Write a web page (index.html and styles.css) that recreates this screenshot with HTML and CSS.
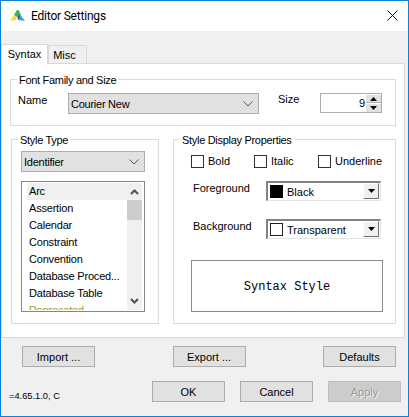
FILE: index.html
```html
<!DOCTYPE html>
<html lang="en">
<head>
<meta charset="utf-8">
<title>Editor Settings</title>
<link rel="stylesheet" href="styles.css">
</head>
<body>
<div class="window">
  <header class="titlebar">
    <svg class="logo" width="15" height="12" viewBox="0 0 15 12">
      <polygon points="7,0 8.5,0 11,5 7.5,7 4,5" fill="#3fae5a"/>
      <polygon points="4,5 7,7.5 6,10 0,11" fill="#f2dc3c"/>
      <polygon points="7.5,6.5 10.5,4.5 10,9 8,10" fill="#2f5f8a"/>
      <polygon points="10.5,5 15,11 8.5,10" fill="#3f9ee0"/>
    </svg>
    <span class="title">Editor Settings</span>
    <svg class="close" width="11" height="11" viewBox="0 0 11 11">
      <path d="M0.5 0.5L10.5 10.5M10.5 0.5L0.5 10.5" stroke="#111" stroke-width="1" fill="none"/>
    </svg>
  </header>
  <div class="tabs">
    <div class="tab tab-active">Syntax</div>
    <div class="tab tab-misc">Misc</div>
  </div>
  <main class="panel">
    <fieldset class="group group-font">
      <legend>Font Family and Size</legend>
      <div class="font-row">
        <span class="name-label">Name</span>
        <div class="combo combo-font">
          <span>Courier New</span>
          <svg class="chev" width="10" height="6" viewBox="0 0 10 6"><path d="M0.5 0.5L5 5L9.5 0.5" stroke="#555" fill="none"/></svg>
        </div>
        <span class="size-label">Size</span>
        <div class="spinner">
          <span class="spin-value">9</span>
          <div class="spin-btns">
            <div class="spin-btn"><svg width="7" height="4" viewBox="0 0 7 4"><polygon points="3.5,0 7,4 0,4" fill="#000"/></svg></div>
            <div class="spin-btn"><svg width="7" height="4" viewBox="0 0 7 4"><polygon points="0,0 7,0 3.5,4" fill="#000"/></svg></div>
          </div>
        </div>
      </div>
    </fieldset>
    <div class="columns">
      <fieldset class="group group-type">
        <legend>Style Type</legend>
        <div class="combo combo-type">
          <span>Identifier</span>
          <svg class="chev" width="10" height="6" viewBox="0 0 10 6"><path d="M0.5 0.5L5 5L9.5 0.5" stroke="#555" fill="none"/></svg>
        </div>
        <div class="list">
          <ul class="items">
            <li class="item item-selected">Arc</li>
            <li class="item">Assertion</li>
            <li class="item">Calendar</li>
            <li class="item">Constraint</li>
            <li class="item">Convention</li>
            <li class="item">Database Proced...</li>
            <li class="item">Database Table</li>
            <li class="item item-olive">Deprecated</li>
          </ul>
          <div class="scrollbar">
            <svg class="scroll-up" width="9" height="6" viewBox="0 0 9 6"><path d="M1 5L4.5 1.5L8 5" stroke="#505050" stroke-width="2" fill="none"/></svg>
            <div class="thumb"></div>
            <svg class="scroll-down" width="9" height="6" viewBox="0 0 9 6"><path d="M1 1L4.5 4.5L8 1" stroke="#505050" stroke-width="2" fill="none"/></svg>
          </div>
        </div>
      </fieldset>
      <fieldset class="group group-display">
        <legend>Style Display Properties</legend>
        <div class="checks">
          <label class="check check-bold"><span class="box"></span>Bold</label>
          <label class="check check-italic"><span class="box"></span>Italic</label>
          <label class="check"><span class="box"></span>Underline</label>
        </div>
        <div class="color-row color-fg">
          <span class="color-label">Foreground</span>
          <div class="color-combo">
            <span class="swatch swatch-black"></span>
            <span class="color-name">Black</span>
            <span class="drop"><svg width="7" height="4" viewBox="0 0 7 4"><polygon points="0,0 7,0 3.5,4" fill="#000"/></svg></span>
          </div>
        </div>
        <div class="color-row color-bg">
          <span class="color-label">Background</span>
          <div class="color-combo">
            <span class="swatch swatch-clear"></span>
            <span class="color-name">Transparent</span>
            <span class="drop"><svg width="7" height="4" viewBox="0 0 7 4"><polygon points="0,0 7,0 3.5,4" fill="#000"/></svg></span>
          </div>
        </div>
        <div class="preview">Syntax Style</div>
      </fieldset>
    </div>
  </main>
  <footer class="footer">
    <div class="row-tools">
      <button class="btn">Import ...</button>
      <button class="btn">Export ...</button>
      <button class="btn">Defaults</button>
    </div>
    <div class="row-actions">
      <span class="version">=4.65.1.0, C</span>
      <button class="btn">OK</button>
      <button class="btn">Cancel</button>
      <button class="btn btn-disabled">Apply</button>
    </div>
  </footer>
</div>
</body>
</html>
```
FILE: styles.css
```css
* { box-sizing: border-box; }
html, body { margin: 0; padding: 0; }
body { background: #f0f0f0; font-family: "Liberation Sans", Arial, sans-serif; font-size: 11px; color: #000; }
.window { width: 409px; height: 417px; border: 1px solid #0f80d8; background: #f0f0f0; overflow: hidden; display: flex; flex-direction: column; }
.titlebar { height: 30px; background: #fff; display: flex; align-items: center; padding: 0 10px 0 9px; flex: none; }
.logo { flex: none; margin-top: -1px; }
.title { margin-left: 6px; flex: 1; font-family: "Roboto", sans-serif; font-size: 12px; letter-spacing: -0.2px; margin-top: -1px; }
.close { flex: none; margin-top: -1px; }
.tabs { display: flex; height: 32px; align-items: flex-end; flex: none; }
.tab { height: 18px; width: 39px; border: 1px solid #d9d9d9; border-bottom: 0; background: #f0f0f0; text-align: center; line-height: 19px; }
.tab-misc { padding-right: 6px; }
.tab-active { height: 20px; width: 47px; background: #fff; border-bottom: 0; margin-bottom: -1px; line-height: 18px; position: relative; z-index: 1; }
.panel { width: 404px; height: 275px; background: #fff; border: 1px solid #d9d9d9; padding: 7px 8px 0 8px; flex: none; }
.group { margin: 0; padding: 0; border: 1px solid #dcdcdc; min-width: 0; }
.group legend { padding: 0 2px; line-height: 18px; height: 16px; font-size: 11px; letter-spacing: -0.3px; }
.group-font { height: 55px; width: 386px; padding-left: 7px; }
.group-font legend { margin-left: -1px; }
.font-row { display: flex; align-items: flex-start; margin-top: 6px; }
.name-label { width: 50px; margin-top: 1px; }
.combo { height: 21px; background: #e1e1e1; border: 1px solid #adadad; display: flex; align-items: center; justify-content: space-between; padding: 0 5px 0 2px; letter-spacing: -0.25px; }
.combo-font { width: 191px; }
.chev { flex: none; }
.size-label { margin-left: 19px; width: 42px; margin-top: 0; }
.spinner { width: 62px; height: 20px; border: 1px solid #adadad; background: #fff; display: flex; }
.spin-value { flex: 1; text-align: right; line-height: 18px; padding-right: 1px; }
.spin-btns { width: 15px; display: flex; flex-direction: column; padding: 1px 0 0; gap: 1px; }
.spin-btn { height: 8px; background: #e1e1e1; border-bottom: 1px solid #adadad; display: flex; align-items: center; justify-content: center; }
.spin-btn + .spin-btn { border-bottom: 0; height: 8px; }
.columns { display: flex; margin-top: 5px; }
.group-type { width: 148px; height: 193px; margin-left: 1px; padding-left: 9px; }
.group-type legend { margin-left: -3px; }
.combo-type { width: 124px; margin-top: 4px; }
.list { width: 124px; height: 131px; margin-top: 9px; border: 1px solid #82878f; background: #fff; display: flex; padding: 1px 2px 1px 5px; }
.items { list-style: none; margin: 0; padding: 0; width: 100px; overflow: hidden; height: 127px; }
.item { height: 17px; line-height: 17px; padding-left: 2px; white-space: nowrap; letter-spacing: -0.2px; }
.item-selected { background: #f0f0f0; }
.item-olive { color: #a89a20; }
.scrollbar { width: 15px; margin-left: 0; height: 127px; background: #f0f0f0; display: flex; flex-direction: column; align-items: center; }
.scroll-up { margin-top: 6px; flex: none; }
.thumb { width: 15px; height: 20px; background: #cdcdcd; margin-top: 5px; flex: none; }
.scroll-down { margin-top: auto; margin-bottom: 6px; flex: none; }
.group-display { width: 223px; height: 193px; margin-left: 14px; padding-left: 17px; }
.group-display legend { margin-left: -11px; }
.checks { display: flex; margin-top: 7px; }
.check { display: flex; align-items: center; height: 14px; width: 63px; }
.check-italic { width: 64px; }
.box { width: 13px; height: 13px; border: 1px solid #333; background: #fff; margin-right: 4px; flex: none; }
.color-row { display: flex; margin-left: 2px; }
.color-fg { margin-top: 13px; }
.color-bg { margin-top: 18px; }
.color-label { width: 73px; line-height: 14px; }
.color-combo { width: 115px; height: 20px; border: 2px solid #828282; border-right: 1px solid #e3e3e3; border-bottom: 1px solid #e3e3e3; background: #fff; display: flex; align-items: center; padding: 0 1px 0 2px; }
.swatch { width: 13px; height: 13px; flex: none; }
.swatch-black { background: #000; }
.swatch-clear { background: #fff; border: 1px solid #222; }
.color-name { flex: 1; margin-left: 4px; font-size: 11px; }
.drop { width: 16px; height: 16px; align-self: flex-start; background: #f0f0f0; border: 1px solid; border-color: #fff #707070 #707070 #fff; display: flex; align-items: center; justify-content: center; flex: none; }
.preview { width: 192px; height: 52px; margin-top: 21px; padding-top: 2px; border: 1px solid #8a8a8a; background: #fff; font-family: "Liberation Mono", monospace; font-size: 12px; display: flex; align-items: center; justify-content: center; }
.footer { flex: 1; display: flex; flex-direction: column; padding-top: 8px; }
.btn { width: 73px; height: 21px; padding: 0; background: #e1e1e1; border: 1px solid #adadad; font: inherit; color: #000; }
.row-tools { display: flex; justify-content: space-between; padding: 0 12px 0 21px; }
.row-actions { display: flex; gap: 15px; align-items: flex-end; margin-top: 14px; padding-right: 7px; }
.version { flex: 1; font-size: 9.3px; padding-left: 8px; line-height: 14px; margin-bottom: -1px; }
.btn-disabled { background: #cccccc; border-color: #bfbfbf; color: #9a9a9a; text-shadow: 1px 1px 0 #f4f4f4; }
```
